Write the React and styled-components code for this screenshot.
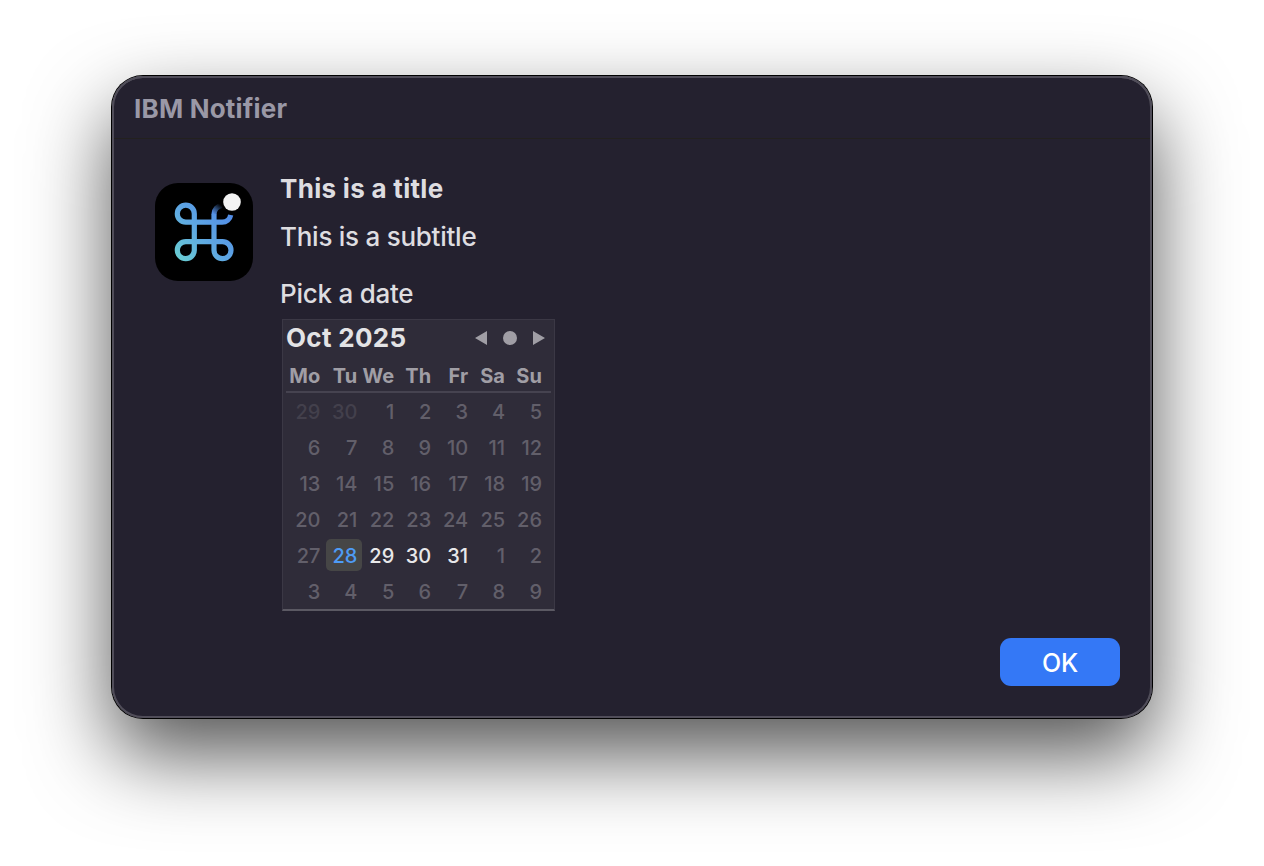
import React from "react";
import styled, { createGlobalStyle } from "styled-components";

const GlobalStyle = createGlobalStyle`
  * { box-sizing: border-box; }
  body {
    margin: 0;
    background: #fff;
    font-family: Inter, "Liberation Sans", sans-serif;
    overflow: hidden;
  }
`;

const Desktop = styled.main`
  display: flex;
  justify-content: center;
  height: 866px;
  padding-top: 76px;
`;

const Window = styled.section`
  display: flex;
  flex-direction: column;
  width: 1040px;
  height: 642px;
  border-radius: 31px;
  background: #24212f;
  box-shadow:
    inset 0 0 0 2px #504d59,
    inset 0 1px 0 1px #65636d,
    0 0 0 1px #000,
    0 36px 82px rgba(0, 0, 0, 0.68);
`;

const TitleBar = styled.header`
  display: flex;
  align-items: center;
  height: 63px;
  margin: 0 2px;
  padding: 3px 20px 0;
  border-bottom: 1px solid #23211f;
`;

const Label = styled.span`
  display: block;
  white-space: nowrap;
  font-size: 26px;
  font-weight: ${(p) => p.$weight || 400};
  line-height: 32px;
  letter-spacing: ${(p) => p.$track || 0}px;
  color: ${(p) => p.$color || "#dedde0"};
`;

const Body = styled.div`
  display: flex;
  flex: 1;
  gap: 27px;
  padding: 34px 43px 0;
`;

const AppIcon = styled.svg`
  flex: none;
  width: 98px;
  height: 98px;
  margin-top: 10px;
  overflow: visible;
`;

const Content = styled.div`
  display: flex;
  flex-direction: column;
  align-items: flex-start;
`;

const Subtitle = styled.div`
  margin: 16px 0 25px;
`;

const Calendar = styled.div`
  width: 273px;
  height: 292px;
  margin: 9px 0 0 2px;
  padding: 0 3px;
  border: 1px solid #3b3845;
  border-bottom: 2px solid #5b5963;
  background: #2f2c39;
`;

const CalendarHead = styled.div`
  display: flex;
  align-items: center;
  justify-content: space-between;
  height: 36px;
  padding-right: 4px;
`;

const Nav = styled.svg`
  width: 72px;
  height: 16px;
  fill: #a09ea5;
`;

const Week = styled.div`
  display: grid;
  grid-template-columns: repeat(7, 36.95px);
  height: ${(p) => (p.$head ? 37 : 36)}px;
  align-items: center;
  ${(p) => p.$head && "padding-top: 3px; border-bottom: 2px solid #464350;"}
`;

const tones = {
  head: "#a09ea5",
  faint: "#43404c",
  dim: "#625f6a",
  active: "#e8e8ea",
  selected: "#4e9bf5",
};

const Day = styled.span`
  display: flex;
  align-items: center;
  justify-content: flex-end;
  width: 36px;
  height: 32px;
  margin-left: 3px;
  padding: 2px 4.6px 0 0;
  border-radius: 5px;
  font-size: 20px;
  font-weight: ${(p) => (p.$tone === "head" ? 700 : 550)};
  letter-spacing: ${(p) => (p.$tone === "head" ? 0.1 : 0)}px;
  color: ${(p) => tones[p.$tone]};
  background: ${(p) => (p.$tone === "selected" ? "#464646" : "transparent")};
`;

const Footer = styled.footer`
  display: flex;
  justify-content: flex-end;
  padding: 0 32px 32px;
`;

const PrimaryButton = styled.button`
  width: 120px;
  height: 48px;
  padding: 2px 0 0;
  border: 0;
  border-radius: 11px;
  background: #3478f6;
  color: #fff;
  font: 500 25px Inter, "Liberation Sans", sans-serif;
  letter-spacing: -0.2px;
`;

const headings = ["Mo", "Tu", "We", "Th", "Fr", "Sa", "Su"];

const weeks = [
  [29, 30, 1, 2, 3, 4, 5],
  [6, 7, 8, 9, 10, 11, 12],
  [13, 14, 15, 16, 17, 18, 19],
  [20, 21, 22, 23, 24, 25, 26],
  [27, 28, 29, 30, 31, 1, 2],
  [3, 4, 5, 6, 7, 8, 9],
];

function toneOf(week, day) {
  if (week === 0 && day > 7) return "faint";
  if (week === 4 && day === 28) return "selected";
  if (week === 4 && day > 28) return "active";
  return "dim";
}

function NotifierIcon() {
  return (
    <AppIcon viewBox="0 0 98 98" aria-hidden="true">
      <defs>
        <linearGradient id="stroke" gradientUnits="userSpaceOnUse" x1="22" y1="76" x2="76" y2="26">
          <stop offset="0" stopColor="#69cdd2" />
          <stop offset="0.45" stopColor="#5fa9e2" />
          <stop offset="1" stopColor="#5089e8" />
        </linearGradient>
        <linearGradient id="fade" gradientUnits="userSpaceOnUse" x1="59" y1="31" x2="66" y2="22">
          <stop offset="0" stopColor="#548fe6" />
          <stop offset="1" stopColor="#000" />
        </linearGradient>
      </defs>
      <rect width="98" height="98" rx="23" fill="#000" />
      <g fill="none" stroke="url(#stroke)" strokeWidth="5.2">
        <path d="M59 31V67.1A8.5 8.5 0 1 0 67.5 58.7H30.8A8.5 8.5 0 1 0 39.3 67.1V30.7A8.5 8.5 0 1 0 30.8 39.2H67A8.7 8.7 0 0 0 75.7 32" />
        <path d="M59 31.3A9 9 0 0 1 67 22.4" stroke="url(#fade)" />
      </g>
      <circle cx="77" cy="19" r="8.8" fill="#f3f3f3" />
    </AppIcon>
  );
}

export default function App() {
  return (
    <>
      <GlobalStyle />
      <Desktop>
        <Window>
          <TitleBar>
            <Label $weight={700} $color="#9a98a6" $track={0.2}>IBM Notifier</Label>
          </TitleBar>
          <Body>
            <NotifierIcon />
            <Content>
              <Label $weight={700} $track={0.3}>This is a title</Label>
              <Subtitle>
                <Label $weight={450} $track={-0.26}>This is a subtitle</Label>
              </Subtitle>
              <Label $weight={450} $track={-0.25}>Pick a date</Label>
              <Calendar>
                <CalendarHead>
                  <Label $weight={700} $color="#e3e3e5" $track={0.32}>Oct 2025</Label>
                  <Nav viewBox="0 0 72 16" aria-hidden="true">
                    <path d="M0 8L12 1V15ZM58 1L70 8L58 15Z" />
                    <circle cx="35" cy="8" r="7" />
                  </Nav>
                </CalendarHead>
                <Week $head>
                  {headings.map((name) => (
                    <Day key={name} $tone="head">{name}</Day>
                  ))}
                </Week>
                {weeks.map((days, week) => (
                  <Week key={week}>
                    {days.map((day) => (
                      <Day key={day} $tone={toneOf(week, day)}>{day}</Day>
                    ))}
                  </Week>
                ))}
              </Calendar>
            </Content>
          </Body>
          <Footer>
            <PrimaryButton>OK</PrimaryButton>
          </Footer>
        </Window>
      </Desktop>
    </>
  );
}
